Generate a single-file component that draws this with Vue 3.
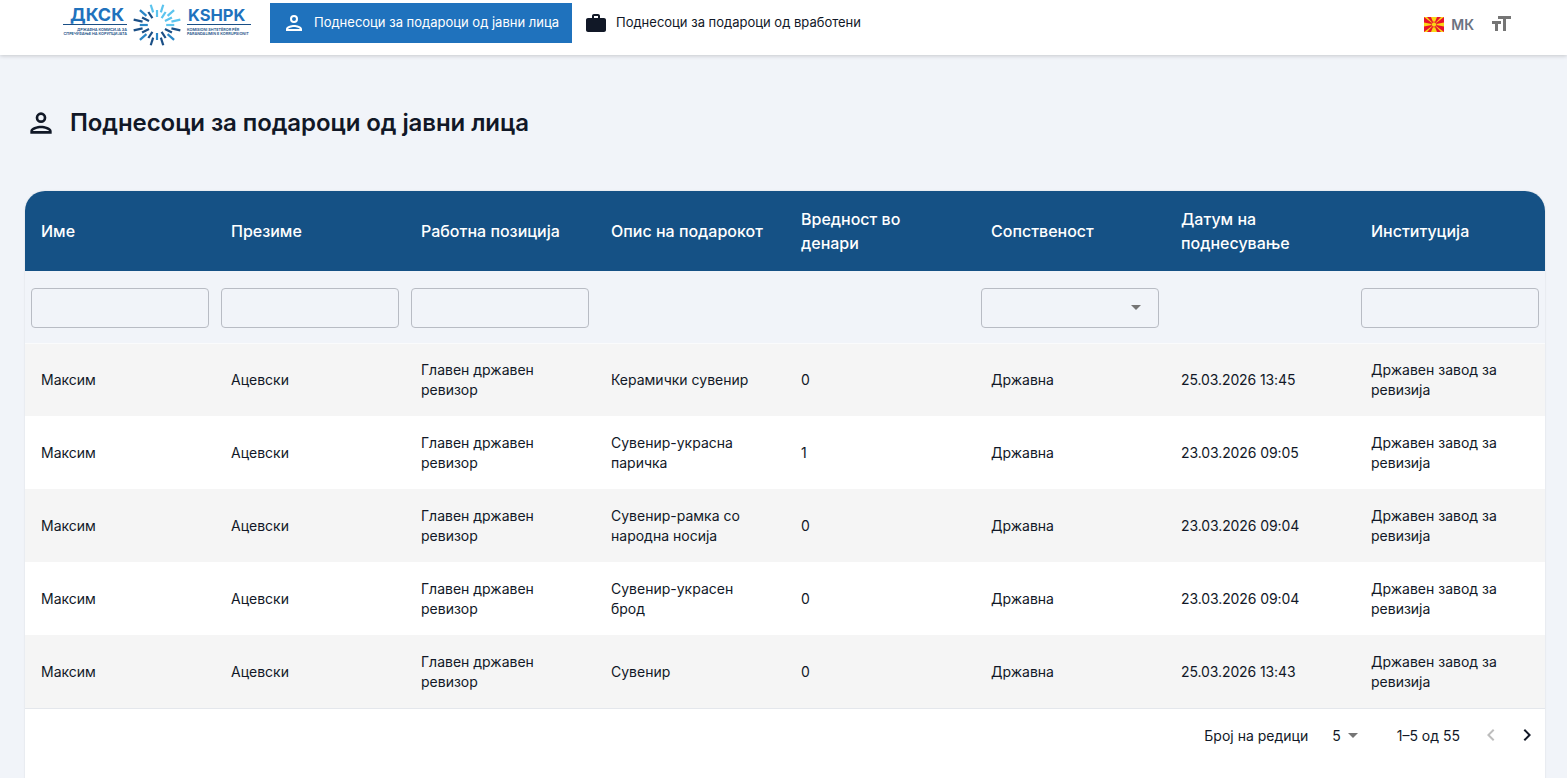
<script setup>
const columns = [
  { label: 'Име', filter: 'text' },
  { label: 'Презиме', filter: 'text' },
  { label: 'Работна позиција', filter: 'text' },
  { label: 'Опис на подарокот' },
  { label: 'Вредност во денари' },
  { label: 'Сопственост', filter: 'select' },
  { label: 'Датум на поднесување' },
  { label: 'Институција', filter: 'text' },
]

const rows = [
  { gift: 'Керамички сувенир', value: 0, date: '25.03.2026 13:45' },
  { gift: 'Сувенир-украсна паричка', value: 1, date: '23.03.2026 09:05' },
  { gift: 'Сувенир-рамка со народна носија', value: 0, date: '23.03.2026 09:04' },
  { gift: 'Сувенир-украсен брод', value: 0, date: '23.03.2026 09:04' },
  { gift: 'Сувенир', value: 0, date: '25.03.2026 13:43' },
]

// зраци на логото: горе/десно светли, долу/лево темни
const rays = Array.from({ length: 24 }, (_, i) => {
  const a = (i / 24) * Math.PI * 2
  const outer = i % 2 ? 21 : 15
  const inner = i % 2 ? 13 : 8
  const sin = Math.sin(a)
  const cos = Math.cos(a)
  const light = sin < 0.2 && cos > -0.5
  return {
    x1: 40 + cos * inner * 1.15,
    y1: 22 + sin * inner,
    x2: 40 + cos * outer * 1.15,
    y2: 22 + sin * outer,
    color: light ? '#5cc4ee' : i % 3 === 0 ? '#2a86c6' : '#1a4f86',
  }
})
</script>

<template>
  <div class="page">
    <header class="topbar">
      <div class="logo">
        <div class="logo-side left">
          <span class="logo-word">ДКСК</span>
          <span class="logo-small">ДРЖАВНА КОМИСИЈА ЗА<br />СПРЕЧУВАЊЕ НА КОРУПЦИЈАТА</span>
        </div>
        <svg class="logo-sun" width="80" height="44" viewBox="0 0 80 44">
          <line
            v-for="(r, i) in rays"
            :key="i"
            :x1="r.x1"
            :y1="r.y1"
            :x2="r.x2"
            :y2="r.y2"
            :stroke="r.color"
            stroke-width="2.2"
          />
        </svg>
        <div class="logo-side right">
          <span class="logo-word">KSHPK</span>
          <span class="logo-small">KOMISIONI SHTETËROR PËR<br />PARANDALIMIN E KORRUPSIONIT</span>
        </div>
      </div>

      <a class="nav-item active">
        <svg width="24" height="24" viewBox="0 0 24 24" fill="#fff">
          <path d="M12 6a2 2 0 1 1 0 4 2 2 0 0 1 0-4m0 10c2.7 0 5.8 1.29 6 2H6c.23-.72 3.31-2 6-2M12 4a4 4 0 1 0 0 8 4 4 0 0 0 0-8zm0 10c-2.670 0-8 1.340-8 4v2h16v-2c0-2.660-5.330-4-8-4z" />
        </svg>
        <span>Поднесоци за подароци од јавни лица</span>
      </a>
      <a class="nav-item">
        <svg width="24" height="24" viewBox="0 0 24 24" fill="#111827">
          <path d="M20 7h-4V5c0-1.100-.9-2-2-2h-4c-1.100 0-2 .9-2 2v2H4c-1.100 0-2 .9-2 2v10c0 1.100.9 2 2 2h16c1.100 0 2-.9 2-2V9c0-1.100-.9-2-2-2zM14 7h-4V5h4v2z" />
        </svg>
        <span>Поднесоци за подароци од вработени</span>
      </a>

      <div class="top-right">
        <svg class="flag" width="20" height="15" viewBox="0 0 20 15">
          <rect width="20" height="15" fill="#e8112d" />
          <path d="M0 0h3l7 7.500L7 0h6l-3 7.500L17 0h3L10 7.500 20 5.500v4L10 7.500 20 15h-3l-7-7.500 3 7.500H7l3-7.500L3 15H0l10-7.500L0 9.500v-4l10 2z" fill="#f9d616" />
          <circle cx="10" cy="7.500" r="2.600" fill="#f9d616" stroke="#e8112d" stroke-width="0.800" />
        </svg>
        <span class="lang">МК</span>
        <svg width="24" height="24" viewBox="0 0 24 24" fill="#757575">
          <path d="M9 4v3h5v12h3V7h5V4H9zm-6 8h3v7h3v-7h3V9H3v3z" />
        </svg>
      </div>
    </header>

    <main class="content">
      <h1 class="title">
        <svg width="32" height="32" viewBox="0 0 24 24" fill="#111827">
          <path d="M12 6a2 2 0 1 1 0 4 2 2 0 0 1 0-4m0 10c2.7 0 5.8 1.29 6 2H6c.23-.72 3.31-2 6-2M12 4a4 4 0 1 0 0 8 4 4 0 0 0 0-8zm0 10c-2.670 0-8 1.340-8 4v2h16v-2c0-2.660-5.330-4-8-4z" />
        </svg>
        Поднесоци за подароци од јавни лица
      </h1>

      <div class="table-card">
        <table>
          <thead>
            <tr class="head-row">
              <th v-for="c in columns" :key="c.label">{{ c.label }}</th>
            </tr>
            <tr class="filter-row">
              <td v-for="c in columns" :key="c.label">
                <input v-if="c.filter === 'text'" class="filter" type="text" />
                <div v-else-if="c.filter === 'select'" class="filter select">
                  <span class="caret"></span>
                </div>
              </td>
            </tr>
          </thead>
          <tbody>
            <tr v-for="(r, i) in rows" :key="i">
              <td>Максим</td>
              <td>Ацевски</td>
              <td>Главен државен ревизор</td>
              <td>{{ r.gift }}</td>
              <td>{{ r.value }}</td>
              <td>Државна</td>
              <td class="date">{{ r.date }}</td>
              <td>Државен завод за ревизија</td>
            </tr>
          </tbody>
        </table>

        <div class="pager">
          <span>Број на редици</span>
          <span class="per-page">5 <span class="caret"></span></span>
          <span class="range">1–5 од 55</span>
          <svg class="prev" width="24" height="24" viewBox="0 0 24 24" fill="#bdbdbd">
            <path d="M15.410 7.410 14 6l-6 6 6 6 1.410-1.410L10.830 12z" />
          </svg>
          <svg class="next" width="24" height="24" viewBox="0 0 24 24" fill="#111827">
            <path d="M10 6 8.590 7.410 13.170 12l-4.580 4.590L10 18l6-6z" />
          </svg>
        </div>
      </div>
    </main>
  </div>
</template>

<style>
html,
body {
  margin: 0;
  height: 100%;
  overflow: hidden;
  background: #f1f4f9;
}
</style>

<style scoped>
.page {
  font-family: Inter, "Liberation Sans", sans-serif;
  color: #111827;
  height: 778px;
  overflow: hidden;
}

.topbar {
  height: 55px;
  background: #fff;
  display: flex;
  align-items: flex-start;
  box-shadow: 0 1px 4px rgba(0, 0, 0, 0.18);
  position: relative;
  padding-left: 63px;
  padding-right: 54px;
}

.logo {
  width: 188px;
  height: 44px;
  margin-top: 3px;
  margin-right: 19px;
  display: flex;
  justify-content: space-between;
  position: relative;
}

.logo-side {
  display: flex;
  flex-direction: column;
  color: #1a4f86;
  width: 64px;
  position: relative;
  z-index: 1;
}

.logo-word {
  font-size: 18px;
  line-height: 18px;
  height: 18px;
  margin-top: 3px;
  font-weight: 700;
  color: #1f72bd;
  border-bottom: 1.5px solid #1a4f86;
  white-space: nowrap;
}

.left .logo-word {
  padding-left: 7px;
}

.left .logo-small {
  text-align: right;
}

.right .logo-word {
  font-size: 16.500px;
  padding-left: 1px;
}

.logo-small {
  font-size: 3.800px;
  line-height: 4.500px;
  margin-top: 2.500px;
  font-weight: 600;
  white-space: nowrap;
}

.logo-sun {
  position: absolute;
  left: 54px;
  top: 0;
}

.nav-item {
  display: flex;
  align-items: center;
  height: 40px;
  margin-top: 3px;
  font-size: 13px;
  color: #111827;
  gap: 8px;
  padding: 0 12px 2px;
  box-sizing: border-box;
}

.nav-item svg {
  margin-top: 2px;
}

.nav-item.active {
  background: #1f72bd;
  color: #fff;
  width: 302px;
}

.top-right {
  margin-left: auto;
  display: flex;
  align-items: center;
  height: 48px;
}

.flag {
  margin-right: 7px;
}

.lang {
  font-size: 14px;
  font-weight: 600;
  color: #6b7280;
  margin-right: 15px;
}

.content {
  padding: 0 22px 0 25px;
}

.title {
  margin: 0;
  height: 136px;
  box-sizing: border-box;
  padding-bottom: 1px;
  display: flex;
  align-items: center;
  gap: 13px;
  font-size: 24px;
  font-weight: 600;
  letter-spacing: -0.08px;
}

.table-card {
  background: #fff;
  border-radius: 20px 20px 0 0;
  overflow: hidden;
  box-shadow: 0 0 2px rgba(0, 0, 0, 0.12);
}

table {
  width: 100%;
  border-collapse: collapse;
  table-layout: fixed;
  font-size: 14px;
}

.head-row {
  background: #155185;
  color: #fff;
  height: 80px;
}

th {
  text-align: left;
  font-size: 16px;
  line-height: 24px;
  font-weight: 500;
  padding: 0 16px;
}

.filter-row {
  background: #f1f4f9;
  height: 72px;
}

.filter-row td {
  padding: 2px 6px 0;
  border-bottom: 1px solid #fafbfc;
}

.filter {
  display: block;
  width: 100%;
  height: 40px;
  box-sizing: border-box;
  border: 1px solid #b8bcc4;
  border-radius: 4px;
  background: #f1f4f9;
  outline: none;
}

.select {
  display: flex;
  align-items: center;
  justify-content: flex-end;
  padding-right: 17px;
}

.caret {
  display: inline-block;
  border-left: 5px solid transparent;
  border-right: 5px solid transparent;
  border-top: 5px solid #757575;
}

tbody tr {
  height: 73px;
}

tbody tr:nth-child(odd) {
  background: #f5f5f5;
}

tbody td {
  padding: 0 16px;
  line-height: 20px;
  font-size: 14px;
}

.date {
  letter-spacing: -0.1px;
}

.pager {
  border-top: 1px solid #e4e7ec;
  height: 52px;
  padding-bottom: 40px;
  display: flex;
  align-items: center;
  justify-content: flex-end;
  font-size: 14px;
  padding-right: 6px;
}

.per-page {
  margin-left: 24px;
  display: flex;
  align-items: center;
  gap: 7px;
}

.range {
  margin-left: 39px;
}

.prev {
  margin-left: 19px;
}

.next {
  margin-left: 12px;
}
</style>
